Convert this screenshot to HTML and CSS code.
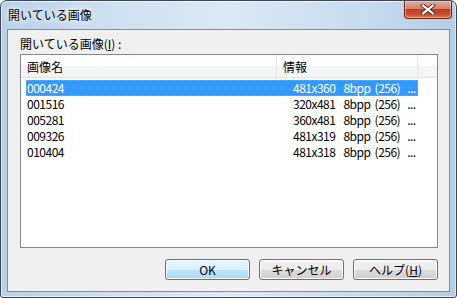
FILE: index.html
```html
<!DOCTYPE html>
<html lang="ja">
<head>
  <meta charset="UTF-8" />
  <title>開いている画像</title>
  <link rel="stylesheet" href="styles.css">
</head>
<body>

  <div class="window">
    <div class="titlebar">
      <span class="title">開いている画像</span>
      <button class="close">
        <svg width="16" height="11" viewBox="0 0 16 11">
          <path d="M3 1.5 L13 9.5 M13 1.5 L3 9.5" stroke="#4a2a24" stroke-width="4" stroke-linecap="square" fill="none"/>
          <path d="M3 1.5 L13 9.5 M13 1.5 L3 9.5" stroke="#ffffff" stroke-width="2.2" stroke-linecap="square" fill="none"/>
        </svg>
      </button>
    </div>

    <div class="client">
      <div class="label">開いている画像(<u>I</u>) :</div>

      <div class="list">
        <div class="list-head">
          <div class="col col-name">画像名</div>
          <div class="col col-info">情報</div>
          <div class="col col-fill"></div>
        </div>
        <div class="rows">
          <div class="row selected">
            <span class="cell cell-name">000424</span>
            <span class="cell cell-info"><span>481x360</span><span class="bpp">8bpp (256)</span><span class="more">...</span></span>
          </div>
          <div class="row">
            <span class="cell cell-name">001516</span>
            <span class="cell cell-info"><span>320x481</span><span class="bpp">8bpp (256)</span><span class="more">...</span></span>
          </div>
          <div class="row">
            <span class="cell cell-name">005281</span>
            <span class="cell cell-info"><span>360x481</span><span class="bpp">8bpp (256)</span><span class="more">...</span></span>
          </div>
          <div class="row">
            <span class="cell cell-name">009326</span>
            <span class="cell cell-info"><span>481x319</span><span class="bpp">8bpp (256)</span><span class="more">...</span></span>
          </div>
          <div class="row">
            <span class="cell cell-name">010404</span>
            <span class="cell cell-info"><span>481x318</span><span class="bpp">8bpp (256)</span><span class="more">...</span></span>
          </div>
        </div>
      </div>

      <div class="buttons">
        <button class="btn default">OK</button>
        <button class="btn">キャンセル</button>
        <button class="btn">ヘルプ(<u>H</u>)</button>
      </div>
    </div>
  </div>

</body>
</html>
```

FILE: styles.css
```css
* {
  box-sizing: border-box;
  margin: 0;
  padding: 0;
}

body {
  font-family: 'Noto Sans CJK JP', sans-serif;
  font-size: 12px;
  color: #000;
  width: 457px;
  height: 298px;
  overflow: hidden;
  background: #fff;
}

.window {
  width: 457px;
  height: 298px;
  border: 1px solid #3d4855;
  border-radius: 7px 7px 3px 3px;
  background: linear-gradient(to right, #b9d0e8 0%, #cfe0f1 25%, #dbe8f5 50%, #c7dbef 80%, #b6cde6 100%);
  display: flex;
  flex-direction: column;
  box-shadow: inset 0 0 0 1px rgba(255, 255, 255, 0.6);
}

.titlebar {
  height: 28px;
  display: flex;
  align-items: flex-start;
  flex-shrink: 0;
}

.title {
  padding: 6px 0 0 7px;
  line-height: 16px;
  text-shadow: 0 0 6px #fff, 0 0 10px #fff;
}

.close {
  margin-left: auto;
  margin-right: 4px;
  width: 48px;
  height: 18px;
  border: 1px solid #6a2418;
  border-top: none;
  border-radius: 0 0 4px 4px;
  background: linear-gradient(to bottom, #e9a99a 0%, #d9806a 45%, #c13c22 50%, #cc5032 80%, #e07e5c 100%);
  box-shadow: inset 0 0 0 1px rgba(255, 220, 210, 0.5);
  display: flex;
  align-items: center;
  justify-content: center;
}

.client {
  flex: 1;
  margin: 0 6px 5px 6px;
  background-color: #f0f0f0;
  border: 1px solid #848e9a;
  padding: 7px 11px 0 12px;
  display: flex;
  flex-direction: column;
}

.label {
  line-height: 14px;
  margin-bottom: 3px;
}

.list {
  height: 194px;
  background: #fff;
  border: 1px solid #828790;
}

.list-head {
  display: flex;
  height: 23px;
  border-bottom: 1px solid #e0e3e8;
  background: linear-gradient(to bottom, #ffffff 0%, #ffffff 50%, #f4f5f7 51%, #f4f5f7 100%);
}

.col {
  padding: 3px 0 0 6px;
  border-right: 1px solid #e3e6ea;
}

.col-name {
  width: 256px;
}

.col-info {
  width: 141px;
}

.col-fill {
  flex: 1;
  border-right: none;
}

.rows {
  padding-top: 2px;
}

.row {
  display: flex;
  height: 16px;
  width: 392px;
  margin-left: 5px;
  line-height: 16px;
  align-items: center;
  letter-spacing: -0.5px;
  word-spacing: 2px;
}

.row.selected {
  background-color: #3399ff;
  color: #fff;
  outline: 1px dotted #e0913a;
  outline-offset: -1px;
}

.cell-name {
  width: 262px;
  padding-left: 1px;
}

.cell-info {
  padding-left: 5px;
}

.cell-info .bpp {
  margin-left: 8px;
}

.cell-info .more {
  margin-left: 7px;
}

.buttons {
  display: flex;
  justify-content: flex-end;
  gap: 9px;
  margin-top: 11px;
}

.btn {
  width: 85px;
  height: 21px;
  font-family: 'Noto Sans CJK JP', sans-serif;
  font-size: 12px;
  color: #000;
  border: 1px solid #707070;
  border-radius: 3px;
  background: linear-gradient(to bottom, #f2f2f2 0%, #ebebeb 50%, #dddddd 51%, #cfcfcf 100%);
  box-shadow: inset 0 0 0 1px #fcfcfc;
}

.btn.default {
  border-color: #3c7fb1;
  background: linear-gradient(to bottom, #eaf6fd 0%, #d9f0fc 50%, #bee6fd 51%, #a7d9f5 100%);
  box-shadow: inset 0 0 0 1px #f4fbff;
}
```
